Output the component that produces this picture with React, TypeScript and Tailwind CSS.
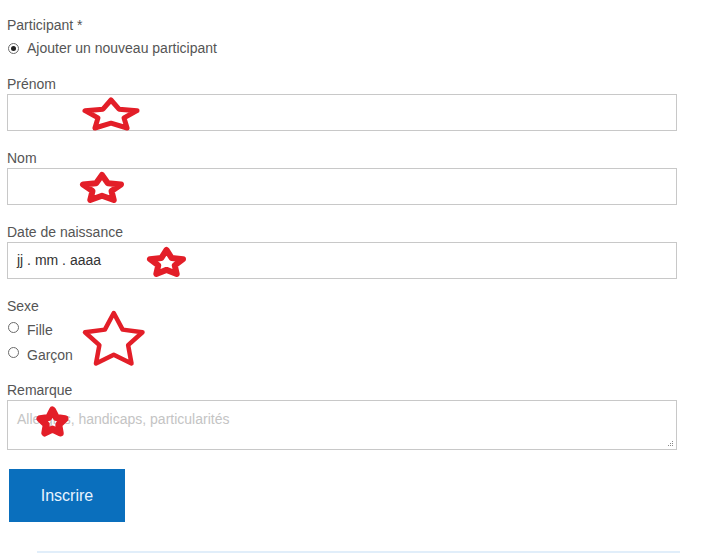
import React from "react";

function Star({ left, top, w, h, sw }: { left: number; top: number; w: number; h: number; sw: number }) {
  const pts = "50,0 64.7,29.8 97.6,34.5 73.8,57.7 79.4,90.5 50,75 20.6,90.5 26.2,57.7 2.4,34.5 35.3,29.8";
  return (
    <svg
      className="absolute overflow-visible pointer-events-none"
      style={{ left: left + sw / 2, top: top + sw / 2, width: w - sw, height: h - sw }}
      viewBox="2.4 0 95.2 90.5"
      preserveAspectRatio="none"
    >
      <polygon
        points={pts}
        fill="none"
        stroke="#e31e28"
        strokeWidth={sw}
        strokeLinejoin="round"
        vectorEffect="non-scaling-stroke"
      />
    </svg>
  );
}

function Radio({ checked }: { checked?: boolean }) {
  return (
    <span className="inline-flex items-center justify-center w-[11px] h-[11px] rounded-full border border-[#6b6b6b] bg-white shrink-0">
      {checked && <span className="block w-[5px] h-[5px] rounded-full bg-[#222]" />}
    </span>
  );
}

export default function App() {
  return (
    <div
      className="relative w-[715px] h-[553px] bg-white overflow-hidden text-[14px] text-[#555]"
      style={{ fontFamily: '"Liberation Sans", Arial, sans-serif' }}
    >
      <div className="pl-[7px] pr-[38px] pt-[15px] flex flex-col">
        <div className="h-[20px] leading-[20px]">Participant *</div>
        <div className="h-[20px] mt-[3px] flex items-center gap-[8px] pl-[1px]">
          <Radio checked />
          <span className="leading-[20px]">Ajouter un nouveau participant</span>
        </div>

        <div className="mt-[16px] h-[20px] leading-[20px]">Prénom</div>
        <div className="h-[37px] border border-[#c8c8c8] bg-white" />

        <div className="mt-[17px] h-[20px] leading-[20px]">Nom</div>
        <div className="h-[37px] border border-[#c8c8c8] bg-white" />

        <div className="mt-[17px] h-[20px] leading-[20px]">Date de naissance</div>
        <div className="h-[37px] border border-[#c8c8c8] bg-white flex items-center pl-[9px] text-[#333]">
          jj . mm . aaaa
        </div>

        <div className="mt-[17px] h-[20px] leading-[20px]">Sexe</div>
        <div className="h-[20px] mt-[1px] flex items-center gap-[8px] pl-[1px]">
          <Radio />
          <span className="leading-[20px] mt-[6px]">Fille</span>
        </div>
        <div className="h-[20px] mt-[5px] flex items-center gap-[8px] pl-[1px]">
          <Radio />
          <span className="leading-[20px] mt-[6px]">Garçon</span>
        </div>

        <div className="mt-[18px] h-[20px] leading-[20px]">Remarque</div>
        <div className="relative h-[50px] border border-[#c8c8c8] bg-white pl-[9px] pt-[8px] text-[#c4c4c4] leading-[20px]">
          Allergies, handicaps, particularités
          <div className="absolute right-[3px] bottom-[3px] grid grid-cols-3 gap-[1px]">
            <span className="w-[1px] h-[1px]" />
            <span className="w-[1px] h-[1px]" />
            <span className="w-[1px] h-[1px] bg-[#888]" />
            <span className="w-[1px] h-[1px]" />
            <span className="w-[1px] h-[1px] bg-[#888]" />
            <span className="w-[1px] h-[1px] bg-[#888]" />
            <span className="w-[1px] h-[1px] bg-[#888]" />
            <span className="w-[1px] h-[1px] bg-[#888]" />
            <span className="w-[1px] h-[1px] bg-[#888]" />
          </div>
        </div>

        <div className="mt-[19px] ml-[2px] w-[116px] h-[53px] bg-[#0a6fbd] text-[#e8f4ff] text-[16px] flex items-center justify-center">
          Inscrire
        </div>

        <div className="mt-[29px] ml-[30px] w-[643px] h-[2px] bg-[#e1eefa]" />
      </div>

      <Star left={82} top={97} w={57} h={33} sw={5} />
      <Star left={80} top={172} w={44} h={31} sw={6} />
      <Star left={147} top={247} w={39} h={30} sw={6} />
      <Star left={83} top={311} w={62} h={55} sw={4.5} />
      <Star left={36} top={406} w={32} h={30} sw={7} />
    </div>
  );
}
